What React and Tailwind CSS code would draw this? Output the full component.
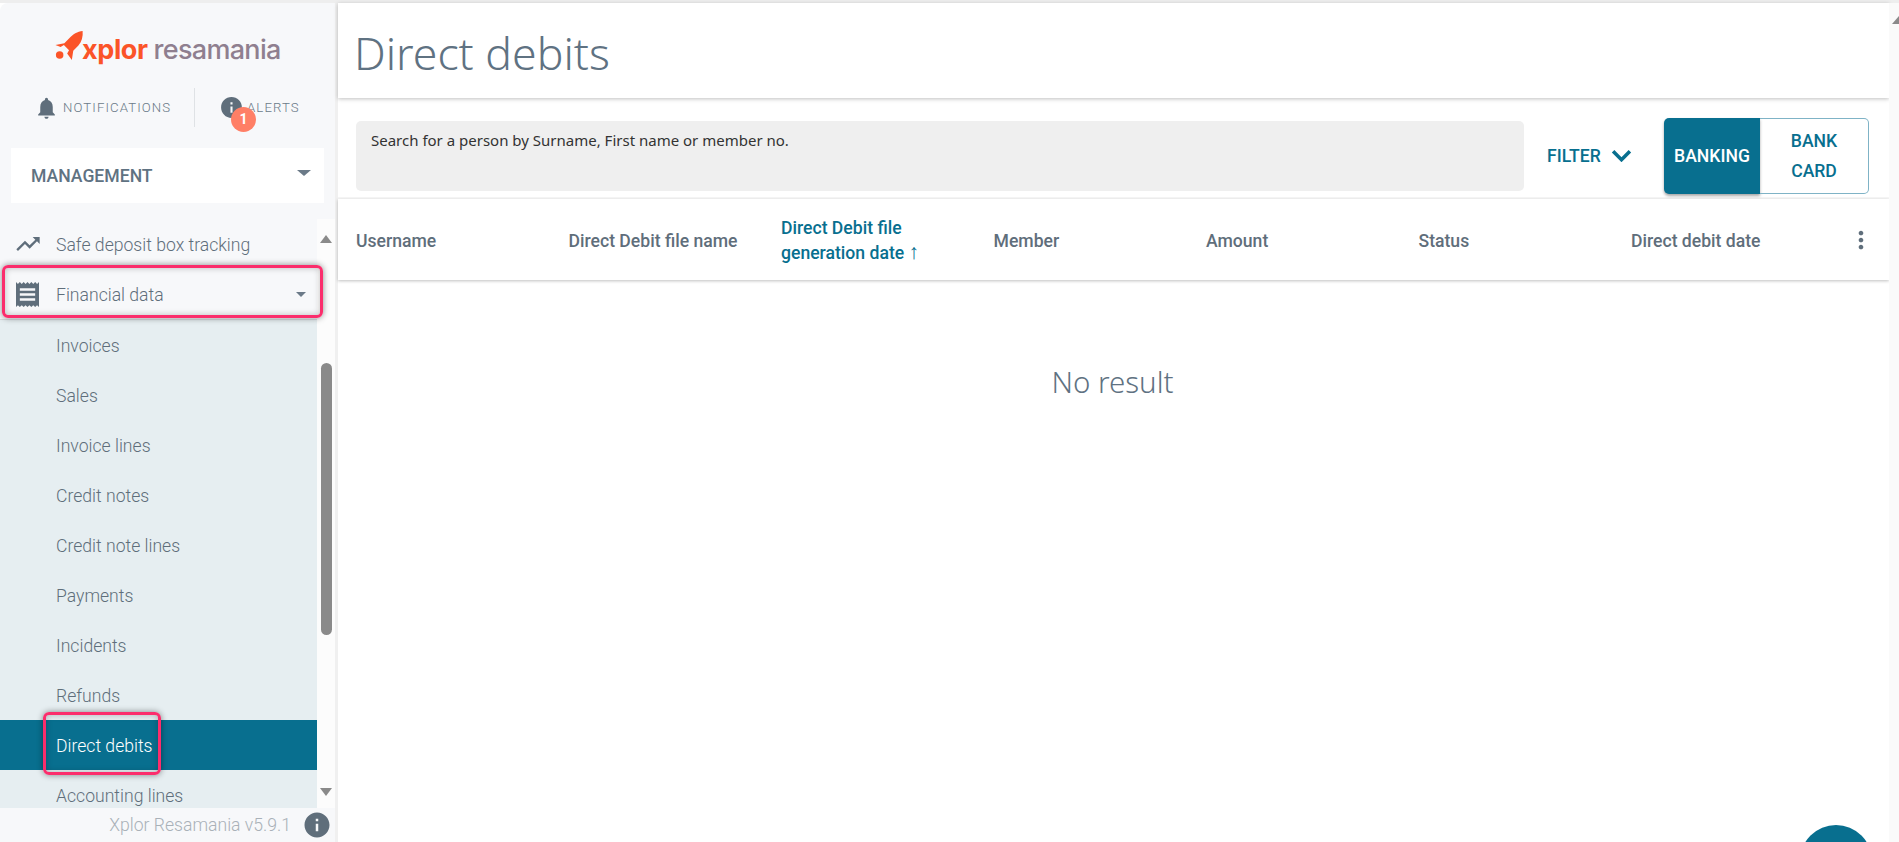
const P = {
  bell: "M12 22c1.1 0 2-.9 2-2h-4c0 1.1.89 2 2 2zm6-6v-5c0-3.07-1.64-5.64-4.5-6.32V4c0-.83-.67-1.5-1.5-1.5s-1.5.67-1.5 1.5v.68C7.63 5.36 6 7.92 6 11v5l-2 2v1h16v-1l-2-2z",
  info: "M12 2C6.48 2 2 6.48 2 12s4.48 10 10 10 10-4.48 10-10S17.52 2 12 2zm1 15h-2v-6h2v6zm0-8h-2V7h2v2z",
  trend: "M16 6l2.29 2.29-4.88 4.88-4-4L2 16.59 3.41 18l6-6 4 4 6.3-6.29L22 12V6z",
  receipt: "M18 17H6v-2h12v2zm0-4H6v-2h12v2zm0-4H6V7h12v2zM3 22l1.5-1.5L6 22l1.5-1.5L9 22l1.5-1.5L12 22l1.5-1.5L15 22l1.5-1.5L18 22l1.5-1.5L21 22V2l-1.5 1.5L18 2l-1.5 1.5L15 2l-1.5 1.5L12 2l-1.5 1.5L9 2 7.5 3.5 6 2 4.5 3.5 3 2v20z",
  more: "M12 8c1.1 0 2-.9 2-2s-.9-2-2-2-2 .9-2 2 .9 2 2 2zm0 2c-1.1 0-2 .9-2 2s.9 2 2 2 2-.9 2-2-.9-2-2-2zm0 6c-1.1 0-2 .9-2 2s.9 2 2 2 2-.9 2-2-.9-2-2-2z",
};

function Icon({ d, className, viewBox = "0 0 24 24" }) {
  return (
    <svg viewBox={viewBox} className={className} fill="currentColor" preserveAspectRatio="none">
      <path d={d} />
    </svg>
  );
}

function Caret({ className }) {
  return <div className={"w-0 h-0 border-x-[5px] border-x-transparent border-t-[5px] border-t-[#6b7a88] " + className} />;
}

function Rocket() {
  return (
    <svg viewBox="0 0 30 32" className="w-[31px] h-[30px] shrink-0 text-[#fb5428]" fill="currentColor">
      <path d="M29 0c.6 6-1 11.500-4.500 15.500L19 21l-1.500 10-5-7 2-3.500-5.500-5.500-3.500 2L0 15l9.500-2L15 7.500C18.500 3.500 23.500.5 29 0z" />
      <circle cx="4.500" cy="25.500" r="4" />
    </svg>
  );
}

const subItems = ["Invoices", "Sales", "Invoice lines", "Credit notes", "Credit note lines", "Payments", "Incidents", "Refunds"];
const cols = ["Username", "Direct Debit file name", null, "Member", "Amount", "Status", "Direct debit date"];

function Sidebar() {
  return (
    <aside className="w-[338px] h-full shrink-0 flex flex-col bg-[#f7f8fa] border-r-[3px] border-[#f0f0f0] rounded-tl-lg relative font-['Roboto',sans-serif]">
      {/* logo */}
      <div className="h-[85px] shrink-0 flex items-center pl-[54px]">
        <Rocket />
        <span className="ml-[-3px] mt-[7px] text-[27px] leading-none font-bold text-[#fb5428] font-['Inter',sans-serif] tracking-[-0.4px]">xplor</span>
        <span className="ml-[6px] mt-[7px] text-[27px] leading-none font-medium text-[#8f7f8f] font-['Inter',sans-serif] tracking-[-0.7px]">resamania</span>
      </div>
      {/* notifications */}
      <div className="h-[39px] shrink-0 flex items-center relative text-[13.200px] font-light tracking-[1.1px] text-[#6b7a88]">
        <div className="w-[195px] h-full flex items-center pl-[35px] border-r border-[#dfe2e5]">
          <Icon d={P.bell} className="w-[25px] h-[26px] mr-[4px] ml-[-1px] text-[#5f6e7b]" />
          <span>NOTIFICATIONS</span>
        </div>
        <div className="flex items-center pl-[24px]">
          <Icon d={P.info} className="w-[25px] h-[25px] text-[#5f6e7b] mr-[3px]" />
          <span>ALERTS</span>
        </div>
        <div className="absolute left-[231px] top-[19px] w-[25px] h-[25px] rounded-full bg-[#ff7f66] text-white text-[14px] font-bold flex items-center justify-center tracking-normal">1</div>
      </div>
      {/* select */}
      <div className="mt-[21px] mx-[11px] h-[55px] shrink-0 bg-white flex items-center justify-between pl-[20px] pr-[13px]">
        <span className="text-[17.600px] font-medium text-[#5f7282] pt-[2px]">MANAGEMENT</span>
        <div className="w-0 h-0 mb-[6px] border-x-[7px] border-x-transparent border-t-[6px] border-t-[#6b7a88]" />
      </div>
      {/* nav */}
      <div className="mt-[16px] flex-1 min-h-0 flex">
        <nav className="w-[317px] overflow-hidden text-[17.600px] font-light text-[#5f6e7b]">
          <div className="h-[50px] flex items-center">
            <Icon d={P.trend} className="w-[28px] h-[28px] ml-[14px] mr-[14px] text-[#5f6e7b]" />
            <span className="pt-[2px]">Safe deposit box tracking</span>
          </div>
          <div className="h-[51px] flex items-center border-b border-[#d8dcdf]">
            <Icon d={P.receipt} viewBox="3 2 18 20" className="w-[23px] h-[25px] ml-[16px] mr-[17px] text-[#5f6e7b]" />
            <span className="flex-1 pt-[2px]">Financial data</span>
            <Caret className="mr-[11px]" />
          </div>
          <div className="bg-[#e6eef1]">
            {subItems.map((s) => (
              <div key={s} className="h-[50px] flex items-center pl-[56px] pt-[2px]">{s}</div>
            ))}
            <div className="h-[50px] flex items-center pl-[56px] pt-[2px] bg-[#086f8f] text-white">Direct debits</div>
            <div className="h-[50px] flex items-center pl-[56px] pt-[2px]">Accounting lines</div>
          </div>
        </nav>
        <div className="w-[18px] relative bg-[#fcfcfc]">
          <div className="absolute left-[3px] top-[16px] w-0 h-0 border-x-[6.500px] border-x-transparent border-b-[8px] border-b-[#8a8a8a]" />
          <div className="absolute left-[4px] top-[144px] w-[11px] h-[272px] rounded-full bg-[#8a8a8a]" />
          <div className="absolute left-[3px] top-[569px] w-0 h-0 border-x-[6.500px] border-x-transparent border-t-[8px] border-t-[#8a8a8a]" />
        </div>
      </div>
      {/* footer */}
      <div className="h-[34px] shrink-0 flex items-center justify-end pr-[3px] bg-[#f7f8fa] text-[17.600px] font-light text-[#a9b1b8]">
        <span>Xplor Resamania v5.9.1</span>
        <Icon d={P.info} className="w-[30px] h-[30px] ml-[11px] text-[#5f6e7b]" />
      </div>
      {/* annotation frames */}
      <div className="absolute left-[2px] top-[262px] w-[321px] h-[53px] rounded-[6px] border-[3px] border-[#fb2d6c] shadow-[0_0_6px_rgba(0,0,0,0.45),inset_0_0_6px_rgba(0,0,0,0.25)]" />
      <div className="absolute left-[43px] top-[709px] w-[118px] h-[63px] rounded-[6px] border-[3px] border-[#fb2d6c] shadow-[0_0_6px_rgba(0,0,0,0.45),inset_0_0_6px_rgba(0,0,0,0.25)]" />
    </aside>
  );
}

function Main() {
  return (
    <main className="flex-1 min-w-0 h-full flex flex-col bg-white font-['Roboto',sans-serif] relative">
      <header className="h-[95px] shrink-0 flex items-center pl-[16px] shadow-[0_1px_4px_rgba(0,0,0,0.25)] relative">
        <h1 className="text-[44.600px] leading-none font-light text-[#5f7282] font-['Noto_Sans',sans-serif] pt-[6px]">Direct debits</h1>
      </header>
      <div className="h-[101px] shrink-0 flex items-center pl-[18px] pr-[20px] border-b-[2px] border-[#f7f7f7] pt-[17px]">
        <div className="w-[1168px] h-[70px] rounded-[5px] bg-[#efefef] pl-[15px] pt-[8px] text-[15px] text-[#333] font-['Noto_Sans',sans-serif]">
          Search for a person by Surname, First name or member no.
        </div>
        <div className="ml-[23px] flex items-center text-[17.600px] font-medium text-[#086f8f]">
          <span>FILTER</span>
          <svg viewBox="0 0 20 12" className="w-[21px] h-[13px] ml-[10px]" fill="none" stroke="currentColor" strokeWidth="3.400">
            <path d="M2 2l8 8 8-8" />
          </svg>
        </div>
        <div className="ml-auto flex h-[76px] w-[205px] text-[17.600px] font-medium">
          <div className="w-[96px] bg-[#086f8f] text-white rounded-l-[5px] flex items-center justify-center shadow-[0_2px_3px_rgba(0,0,0,0.35)]">BANKING</div>
          <div className="flex-1 border border-l-0 border-[#7fb3c6] rounded-r-[5px] text-[#086f8f] flex items-center justify-center text-center leading-[30px]">BANK<br />CARD</div>
        </div>
      </div>
      <div className="h-[81px] shrink-0 flex items-center pl-[18px] pt-[3px] text-[17.600px] font-medium text-[#5f6e7b] shadow-[0_1px_3px_rgba(0,0,0,0.25)] relative">
        {cols.map((c, i) => (
          <div key={i} className="w-[212.500px] shrink-0">
            {c ?? <span className="block text-[#086f8f] leading-[25px]">Direct Debit file<br />generation date <span className="text-[21px] font-normal leading-none">↑</span></span>}
          </div>
        ))}
        <Icon d={P.more} className="absolute left-[1509px] top-[27px] w-[28px] h-[28px] text-[#5f6e7b]" />
      </div>
      <div className="flex-1 flex justify-center pt-[83px] text-[29.500px] font-light text-[#5f7282] font-['Noto_Sans',sans-serif]">
        <span className="leading-[38px] mr-[2px]">No result</span>
      </div>
      <div className="absolute left-[1462px] top-[822px] w-[72px] h-[72px] rounded-full bg-[#086f8f]" />
    </main>
  );
}

export default function App() {
  return (
    <div className="w-[1899px] h-[842px] overflow-hidden bg-white flex flex-col">
      <div className="h-[3px] shrink-0 bg-[#eeeeee]" />
      <div className="flex-1 min-h-0 flex">
        <Sidebar />
        <Main />
        <div className="w-[10px] h-full shrink-0 bg-[#fafafa] relative">
          <div className="absolute right-0 top-[13px] w-0 h-0 border-l-[7px] border-l-transparent border-b-[8px] border-b-[#8a8a8a]" />
        </div>
      </div>
    </div>
  );
}
